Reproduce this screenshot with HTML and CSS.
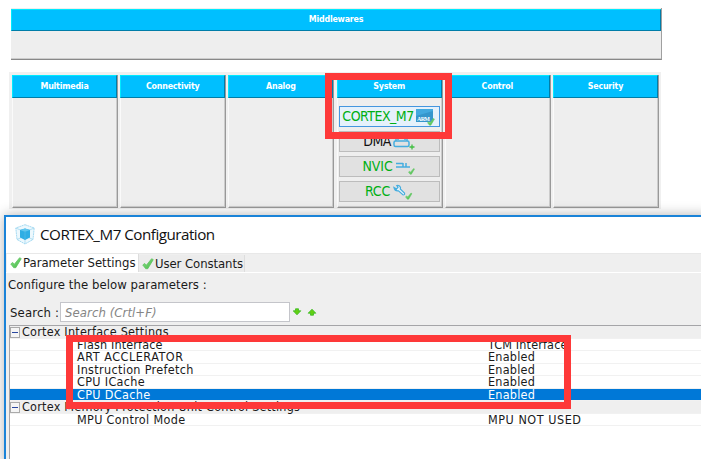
FILE: index.html
```html
<!DOCTYPE html>
<html lang="en">
<head>
<meta charset="utf-8">
<title>CORTEX_M7 Configuration</title>
<link rel="stylesheet" href="styles.css">
</head>
<body>
<svg class="defs" width="0" height="0">
  <defs>
    <linearGradient id="leaf" x1="0" y1="0" x2="1" y2="1"><stop offset="0" stop-color="#8be08b"/><stop offset="1" stop-color="#45ba45"/></linearGradient>
    <symbol id="check" viewBox="0 0 11 11"><path d="M.7 6.400 2.500 5l1.500 1.600L8.800.7l1.500.8L5.300 9.800H3.400z" fill="url(#leaf)" stroke="#5fc35f" stroke-width=".7"/></symbol>
  </defs>
</svg>
<main class="screen">
  <section class="middlewares">
    <h2 class="bar">Middlewares</h2>
  </section>
  <section class="peripherals">
    <div class="column"><h2 class="bar">Multimedia</h2></div>
    <div class="column"><h2 class="bar">Connectivity</h2></div>
    <div class="column"><h2 class="bar">Analog</h2></div>
    <div class="column">
      <h2 class="bar">System</h2>
      <div class="buttons">
        <button class="ip active"><span class="cortex">CORTEX_M7</span>
          <svg width="20" height="18" viewBox="0 0 20 18"><path d="M0 1h17v13H0z" fill="#42a9df"/><path d="M0 8 17 3v11H0z" fill="#3596cc"/><text x="1" y="12.500" class="arm" textLength="13">ARM</text><use href="#check" x="11" y="10" width="8" height="8"/></svg></button>
        <button class="ip plain"><span>DMA</span>
          <svg width="22" height="18" viewBox="0 0 22 18"><g fill="none" stroke="#45addf" stroke-width="1.500"><path d="M3 8V5q0-1.500 1.500-1.500h8Q14 3.500 14 5v3"/><rect x="1" y="8" width="15" height="5.500" rx="1.500"/><path d="M5 4v3M12 4v3"/></g><path d="M16.500 14h5M19 11.500v5" stroke="#42bf42" stroke-width="1.300"/></svg></button>
        <button class="ip"><span>NVIC</span>
          <svg width="21" height="16" viewBox="0 0 21 16"><path d="M1 4.500h7M1 8h14M8 4v4M11 4v4" fill="none" stroke="#45addf" stroke-width="1.500"/><use href="#check" x="13" y="9" width="7" height="7"/></svg></button>
        <button class="ip"><span>RCC</span>
          <svg width="21" height="16" viewBox="0 0 21 16"><path d="M2 3.500 4.500 5 6 3.500 4.800 1.500q3-.6 3.700 2l-.2 1.500 4.200 4q.6 2-1.400 2L6.500 6.800Q3 7.500 2 3.500Z" fill="#e8f4fa" stroke="#45addf" stroke-width="1.200"/><use href="#check" x="13" y="8.500" width="7.500" height="7.500"/></svg></button>
      </div>
    </div>
    <div class="column"><h2 class="bar">Control</h2></div>
    <div class="column"><h2 class="bar">Security</h2></div>
  </section>

  <section class="window">
    <header class="titlebar">
      <svg width="20" height="21" viewBox="0 0 20 21"><path d="M10 .7 19.200 4 18 15.500 10 20 2 15.500.8 4z" fill="#edf8fd" stroke="#83cced" stroke-width=".7" stroke-dasharray="2 .5"/><path d="m.8 4 9.200 4 9.200-4M10 8v12M2 15.500 10 12l8 3.500" fill="none" stroke="#9bd5ef" stroke-width=".7"/><path d="m5 6 5-1.500L15 6v7.500L10 16l-5-2.500z" fill="#2eaee4"/><path d="m5 6 5 1.800L15 6l-5-1.500z" fill="#62c7ee"/><path d="M10 7.800V16" stroke="#54bce7" stroke-width=".7"/></svg>
      <h1>CORTEX_M7 Configuration</h1>
    </header>
    <nav class="tabs">
      <div class="tab selected"><svg width="12" height="12"><use href="#check" width="12" height="12"/></svg><span>Parameter Settings</span></div>
      <div class="tab"><svg width="12" height="12"><use href="#check" width="12" height="12"/></svg><span class="constants">User Constants</span></div>
    </nav>
    <div class="content">
      <p class="hint">Configure the below parameters :</p>
      <div class="search">
        <label for="q">Search :</label>
        <input id="q" type="text" placeholder="Search (Crtl+F)">
        <svg width="24" height="8" viewBox="0 0 24 8"><path d="M2.500.8h3v2h2.300L4 6.800.2 2.800h2.300z" fill="#62cf12" stroke="#37ba20" stroke-width=".8"/><path d="M17.500 7.200h3v-2h2.300L19 1.200l-3.800 4h2.300z" fill="#62cf12" stroke="#37ba20" stroke-width=".8"/></svg>
      </div>
      <div class="tree">
        <div class="row group"><i class="toggle"></i><span>Cortex Interface Settings</span></div>
        <div class="row"><span class="tight">Flash Interface</span><span class="tight">TCM Interface</span></div>
        <div class="row"><span class="wide">ART ACCLERATOR</span><span>Enabled</span></div>
        <div class="row"><span class="medium">Instruction Prefetch</span><span>Enabled</span></div>
        <div class="row"><span class="medium">CPU ICache</span><span>Enabled</span></div>
        <div class="row current"><span class="medium">CPU DCache</span><span>Enabled</span></div>
        <div class="row group"><i class="toggle"></i><span>Cortex Memory Protection Unit Control Settings</span></div>
        <div class="row"><span class="medium">MPU Control Mode</span><span class="wide">MPU NOT USED</span></div>
      </div>
    </div>
  </section>
  <div class="highlight system"></div>
  <div class="highlight params"></div>
</main>
</body>
</html>
```
FILE: styles.css
```css
* { box-sizing: border-box; }
body { margin: 0; background: #fff; font-family: "DejaVu Sans Condensed", "DejaVu Sans", sans-serif; color: #1a1a1a; }
h1, h2, p { margin: 0; font-weight: normal; }
.defs { display: block; }
.screen { position: relative; width: 701px; height: 459px; overflow: hidden; display: flex; flex-direction: column; }
.middlewares { flex: none; width: 651px; height: 52px; margin: 8px 0 0 11px; background: #eee; border-right: 1px solid #a0a0a0; border-bottom: 1px solid #888; box-shadow: inset 0 -1px #ccc; padding-top: 1px; }
.bar { height: 22px; background: #00bfff; border: 1px solid #00eaff; border-right-color: #007da8; border-bottom-color: #007da8; color: #fff; font: bold 8.800px/19px "DejaVu Sans Condensed", "DejaVu Sans", sans-serif; text-align: center; letter-spacing: -.2px; }
.peripherals { flex: none; width: 652px; height: 137px; margin: 12px 0 0 9px; padding: 3px 2px 3px 3px; background: #f0f0f0; display: grid; grid-template-columns: repeat(6, 106px); justify-content: space-between; }
.column { height: 133px; background: #eee; border-right: 1px solid #999; border-bottom: 1px solid #999; border-left: 1px solid #fafafa; box-shadow: inset -1px -1px #ccc; }
.column .bar { height: 23px; margin-left: -1px; line-height: 20px; }
.buttons { display: grid; grid-auto-rows: 21px; row-gap: 4px; padding: 8px 2px 0 1px; }
.ip { appearance: none; display: flex; justify-content: center; align-items: center; gap: 2px; height: 21px; padding: 0; border: 1px solid #bcbcbc; background: #e1e1e1; color: #00af14; font: 14px/19px "DejaVu Sans Condensed", "DejaVu Sans", sans-serif; letter-spacing: -.1px; overflow: hidden; white-space: nowrap; }
.ip.active { border-color: #4496df; background: #e5f1fb; }
.ip.plain { color: #111; letter-spacing: -.6px; }
.cortex { letter-spacing: -.5px; }
.arm { font: bold 6px "Liberation Serif", serif; fill: #fff; letter-spacing: 0; }
.window { flex: 1; margin: 6px -10px 0 4px; border: 2px solid #1a83d8; border-bottom: 0; background: #efefef; box-shadow: 0 0 12px rgba(0, 0, 0, .3); }
.titlebar { height: 36px; padding: 0 0 2px 9px; background: #fff; display: flex; align-items: center; gap: 5px; }
.titlebar h1 { font: 15.200px/20px "Open Sans", "Noto Sans", sans-serif; letter-spacing: -.5px; color: #111; white-space: nowrap; }
.tabs { display: flex; align-items: flex-end; height: 20px; border-top: 1px solid #e8e8e8; border-bottom: 1px solid #fff; padding-left: 1px; font-size: 13px; }
.tab { display: flex; align-items: center; gap: 1px; height: 17px; width: 106px; padding-left: 3px; background: #ececec; border-right: 1px solid #ddd; white-space: nowrap; }
.tab.selected { height: 18px; width: 132px; background: #fff; padding: 0 0 1px 3px; }
.constants { letter-spacing: -.08px; }
.content { padding-left: 2px; font-size: 13px; }
.hint { height: 29px; padding-top: 4px; line-height: 16px; letter-spacing: .05px; }
.search { display: flex; align-items: center; height: 20px; margin-left: 2px; }
.search label { width: 50px; white-space: nowrap; letter-spacing: .15px; }
.search input { width: 230px; height: 20px; padding: 0 4px; border: 1px solid #c4c5ca; background: #fff; font: italic 13px "DejaVu Sans Condensed", "DejaVu Sans", sans-serif; letter-spacing: .07px; outline: 0; }
.search input::placeholder { color: #858585; opacity: 1; }
.search svg { margin-left: 3px; }
.tree { margin: 3px 0 0 1px; height: 140px; border-top: 1px solid #a5a5a8; border-left: 1px solid #a5a5a8; background: #fff; font-size: 12.500px; line-height: 12.500px; letter-spacing: .24px; }
.row { display: grid; grid-template-columns: 411px 1fr; height: 12.500px; padding-left: 67px; border-bottom: 1px solid #f1f1f1; white-space: nowrap; }
.row.group { display: flex; gap: 2px; padding: 0; background: #efefef; }
.row.current { background: #0078d7; color: #fff; }
.tight { letter-spacing: .15px; }
.medium { letter-spacing: .33px; }
.wide { letter-spacing: .53px; }
.toggle { flex: none; width: 10px; height: 11px; margin-top: 1px; border: 1px solid #aaa; background: linear-gradient(#2b48a0, #2b48a0) center / 6px 1px no-repeat #f5f5f5; }
.highlight { position: absolute; z-index: 2; border: 7px solid #fe3939; }
.highlight.system { left: 325px; top: 73px; width: 127px; height: 66px; }
.highlight.params { left: 66px; top: 335px; width: 505px; height: 74px; }
```
